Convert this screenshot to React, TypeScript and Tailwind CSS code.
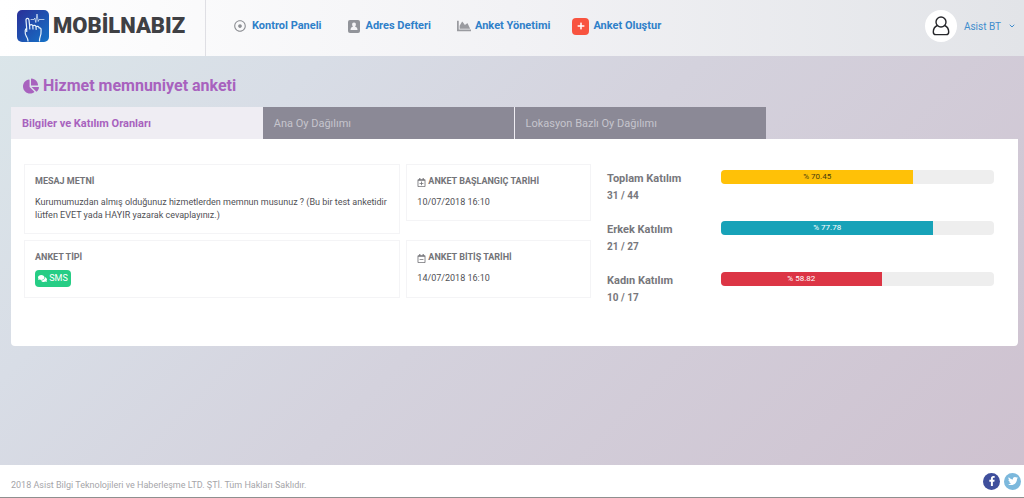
import React, { useState } from "react";
import {
  FaChartArea,
  FaChartPie,
  FaComments,
  FaFacebookF,
  FaPlus,
  FaRegCalendarMinus,
  FaRegCalendarPlus,
  FaRegDotCircle,
  FaTwitter,
} from "react-icons/fa";
import { FiChevronDown } from "react-icons/fi";

const tabs = [
  "Bilgiler ve Katılım Oranları",
  "Ana Oy Dağılımı",
  "Lokasyon Bazlı Oy Dağılımı",
];

const stats = [
  { label: "Toplam Katılım", count: "31 / 44", value: 70.45, color: "bg-[#ffc107] text-[#4a3c10]" },
  { label: "Erkek Katılım", count: "21 / 27", value: 77.78, color: "bg-[#17a2b8] text-white" },
  { label: "Kadın Katılım", count: "10 / 17", value: 58.82, color: "bg-[#dc3545] text-white" },
];

const Logo: React.FC = () => (
  <svg viewBox="0 0 32 32" className="w-8 h-8" aria-hidden="true">
    <defs>
      <linearGradient id="logo" x1="0" y1="0" x2="1" y2="1">
        <stop offset="0" stopColor="#2a2f98" />
        <stop offset="1" stopColor="#1473c8" />
      </linearGradient>
    </defs>
    <rect width="32" height="32" rx="5" fill="url(#logo)" />
    <g fill="none" stroke="#e6f2fb" strokeLinecap="round" strokeLinejoin="round">
      <path
        strokeWidth="1.2"
        d="M11 31c-.2-1.800-.6-2.900-1.400-4.200-1.300-1.900-1.700-3.800-1.400-6.300.2-1.300.8-1.900 1.500-1.900L9 10.300c-.2-2.400 2.700-2.600 3-.2l.6 5.700c.5-1.600 2.900-1.400 3.200.2.800-1.100 2.900-.8 3.200.7 1-.8 2.900-.3 3.100 1.200 1.200-.3 2 .5 2 1.800.1 3.100-.1 4.900-.9 6.900-.5 1.300-.7 2.600-.7 4.400M12.600 16l.2 3M15.800 16.200l.2 2.800M19 16.900l.2 2.500M9.700 18.600v2.800"
      />
      <path strokeWidth=".7" d="M14 9.500h3l.8-1.500 1 4.500L20 4l1.200 7.500.9-2H27" />
    </g>
  </svg>
);

const ContactIcon: React.FC = () => (
  <svg viewBox="0 0 12 13" className="w-3 h-[13px]" aria-hidden="true">
    <rect width="12" height="13" rx="2" fill="#92949a" />
    <path
      fill="#f4f4f6"
      d="M6 2.500a1.900 1.900 0 0 1 1.900 2.100c0 1-.4 1.700-.9 2.100 1.600.3 2.500 1.100 2.500 3.300h-7c0-2.200.9-3 2.500-3.300-.5-.4-.9-1.100-.9-2.100A1.900 1.900 0 0 1 6 2.500z"
    />
  </svg>
);

const UserIcon: React.FC = () => (
  <svg
    viewBox="0 0 18 20"
    className="w-[18px] h-5"
    fill="none"
    stroke="currentColor"
    strokeWidth="1.4"
    strokeLinejoin="round"
    aria-hidden="true"
  >
    <circle cx="9" cy="6" r="5" />
    <path d="M5.300 9.500C2.700 10.800 1.300 13 1.300 15.900c0 1.900.9 2.700 2.500 2.700h10.400c1.600 0 2.500-.8 2.500-2.700 0-2.900-1.400-5.100-4-6.400" />
  </svg>
);

const Header: React.FC = () => (
  <header className="flex h-14 shrink-0 bg-linear-to-r from-white via-[#f2f2f5] to-[#e2e4e8]">
    <a
      href="#"
      className="flex w-[206px] shrink-0 items-center gap-1 border-r border-[#dfdfe4] pb-1 pl-[17px]"
    >
      <Logo />
      <span className="text-[22px] leading-8 font-black text-[#3f4044]">MOBİLNABIZ</span>
    </a>
    <nav className="flex flex-1 items-center pb-1 pl-7 text-[11px] font-bold text-[#2f80c9]">
      <a href="#" className="flex items-center gap-1.5 mr-[26px]">
        <FaRegDotCircle className="size-3 text-[#8d8f94]" />
        Kontrol Paneli
      </a>
      <a href="#" className="flex items-center gap-1.5 mr-[26px]">
        <ContactIcon />
        Adres Defteri
      </a>
      <a href="#" className="flex items-center gap-1 mr-[22px]">
        <FaChartArea className="size-3.5 text-[#9a9ba0]" />
        Anket Yönetimi
      </a>
      <a href="#" className="flex items-center gap-1">
        <span className="flex size-[17px] items-center justify-center rounded bg-[#f8533f] text-white">
          <FaPlus className="size-2" />
        </span>
        Anket Oluştur
      </a>
    </nav>
    <button className="flex items-center gap-[7px] pb-1 pr-2 text-[10px] text-[#3f8dcd]">
      <span className="flex size-8 items-center justify-center rounded-full bg-white text-[#26272b]">
        <UserIcon />
      </span>
      Asist BT
      <FiChevronDown className="size-2" strokeWidth={3} />
    </button>
  </header>
);

type BoxProps = { title: React.ReactNode; className?: string; children: React.ReactNode };

const InfoBox: React.FC<BoxProps> = ({ title, className = "", children }) => (
  <section className={"border border-[#f4f4f6] px-2.5 pt-2.5 text-[9px] " + className}>
    <h2 className="flex h-3.5 items-center gap-0.5 font-bold text-[#737378]">{title}</h2>
    <div className="pt-[7px] leading-[13px] text-[#505055]">{children}</div>
  </section>
);

const App: React.FC = () => {
  const [active, setActive] = useState(0);

  return (
    <div className="flex min-h-screen flex-col border-b border-[#8f8f8f] bg-linear-[135deg,#dbe7ea_0%,#d8dde6_25%,#d4d2dd_50%,#cec1cf_100%] font-[Roboto,sans-serif]">
      <Header />
      <main className="flex-1 pl-[11px] pr-1.5 pt-[18px]">
        <h1 className="flex h-6 items-center gap-1 pl-3 text-base font-bold text-[#a862be]">
          <FaChartPie className="size-4" />
          Hizmet memnuniyet anketi
        </h1>
        <div className="mt-[9px] grid grid-cols-4" role="tablist">
          {tabs.map((tab, i) => (
            <button
              key={tab}
              role="tab"
              aria-selected={i === active}
              onClick={() => setActive(i)}
              className={
                "h-8 border-r border-[#efedf3] pl-[11px] pt-0.5 text-left text-[11px] last:border-r-0 " +
                (i === active
                  ? "bg-[#efedf3] font-bold text-[#a862be]"
                  : "bg-[#8b8996] text-[#c6c5cd]")
              }
            >
              {tab}
            </button>
          ))}
        </div>
        <div className="flex min-h-[207px] rounded-b bg-white pt-[25px] pl-[13px] pr-6">
          <div className="grid flex-1 grid-cols-[377fr_185fr] content-start gap-x-1.5 gap-y-1.5">
            <InfoBox title="MESAJ METNİ" className="h-[70px]">
              Kurumumuzdan almış olduğunuz hizmetlerden memnun musunuz ? (Bu bir test anketidir
              lütfen EVET yada HAYIR yazarak cevaplayınız.)
            </InfoBox>
            <InfoBox
              className="h-[57px]"
              title={
                <>
                  <FaRegCalendarPlus className="size-[9px]" /> ANKET BAŞLANGIÇ TARİHİ
                </>
              }
            >
              10/07/2018 16:10
            </InfoBox>
            <InfoBox title="ANKET TİPİ" className="h-[58px]">
              <span className="-mt-0.5 flex h-[17px] w-9 items-center justify-center gap-0.5 rounded bg-[#26cd85] text-white">
                <FaComments className="size-[9px]" />
                SMS
              </span>
            </InfoBox>
            <InfoBox
              className="h-[58px]"
              title={
                <>
                  <FaRegCalendarMinus className="size-[9px]" /> ANKET BİTİŞ TARİHİ
                </>
              }
            >
              14/07/2018 16:10
            </InfoBox>
          </div>
          <div className="ml-4 flex w-[387px] flex-col pt-1.5">
            {stats.map((stat) => (
              <div key={stat.label} className="flex h-[51px]">
                <div className="w-[114px] font-bold text-[#77777c]">
                  <p className="pt-px text-[11px] leading-4">{stat.label}</p>
                  <p className="text-[10px] leading-[18px]">{stat.count}</p>
                </div>
                <div
                  role="progressbar"
                  aria-label={stat.label}
                  aria-valuenow={stat.value}
                  className="h-3.5 flex-1 overflow-hidden rounded-sm bg-[#eeeeee]"
                >
                  <div
                    className={"h-full text-center text-[8px] leading-3.5 " + stat.color}
                    style={{ width: `${stat.value}%` }}
                  >
                    % {stat.value}
                  </div>
                </div>
              </div>
            ))}
          </div>
        </div>
      </main>
      <footer className="flex h-8 items-center justify-between bg-white pl-[11px] pr-[3px] text-[9px] text-[#a5a5a9]">
        <p className="pt-2.5">2018 Asist Bilgi Teknolojileri ve Haberleşme LTD. ŞTİ. Tüm Hakları Saklıdır.</p>
        <div className="flex gap-1 text-white">
          <a
            href="#"
            aria-label="Facebook"
            className="flex size-[17px] items-center justify-center rounded-full bg-[#3f4f9c]"
          >
            <FaFacebookF className="size-2.5" />
          </a>
          <a
            href="#"
            aria-label="Twitter"
            className="flex size-[17px] items-center justify-center rounded-full bg-[#7cb8dc]"
          >
            <FaTwitter className="size-2.5" />
          </a>
        </div>
      </footer>
    </div>
  );
};

export default App;
